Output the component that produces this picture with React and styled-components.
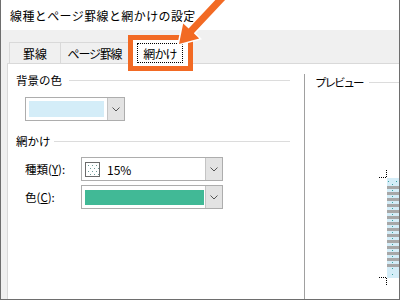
import React from "react";
import styled, { createGlobalStyle } from "styled-components";

const GlobalStyle = createGlobalStyle`
  body {
    margin: 0;
    background: #fff;
    font-family: "Noto Sans CJK JP", "Noto Sans", sans-serif;
    color: #000;
  }
`;

const Window = styled.div`
  position: relative;
  width: 400px;
  height: 300px;
  box-sizing: border-box;
  border-left: 1px solid #6e6e6e;
  border-right: 1px solid #6e6e6e;
  border-bottom: 1px solid #6e6e6e;
  display: flex;
  flex-direction: column;
  background: #fff;
  overflow: hidden;
`;

const TitleBar = styled.div`
  flex: none;
  height: 30px;
  padding-left: 9px;
  display: flex;
  align-items: center;
  font-size: 12px;
  letter-spacing: 0.4px;
`;

const Body = styled.div`
  flex: 1;
  display: flex;
  flex-direction: column;
  background: #f0f0f0;
  padding-left: 6px;
  min-height: 0;
`;

const TabRow = styled.div`
  flex: none;
  height: 33px;
  display: flex;
  align-items: flex-end;
  padding-left: 2px;
  position: relative;
  z-index: 1;
`;

const Tab = styled.div`
  position: relative;
  box-sizing: border-box;
  width: ${(p) => p.$width}px;
  height: ${(p) => (p.$active ? 26 : 21)}px;
  margin-left: ${(p) => (p.$first || p.$active ? 0 : -1)}px;
  margin-bottom: ${(p) => (p.$active ? -1 : 0)}px;
  border: 1px solid #d9d9d9;
  border-bottom: none;
  background: ${(p) => (p.$active ? "#fff" : "#f0f0f0")};
  display: flex;
  justify-content: center;
  align-items: ${(p) => (p.$active ? "flex-start" : "center")};
  padding-top: ${(p) => (p.$active ? 4 : 0)}px;
  font-size: 12px;
  letter-spacing: ${(p) => p.$tight || 0}px;
  white-space: nowrap;
`;

const FocusRing = styled.span`
  box-sizing: border-box;
  width: 46px;
  height: 20px;
  border: 1px dotted #000;
  display: flex;
  align-items: center;
  justify-content: center;
  letter-spacing: -0.8px;
`;

const Highlight = styled.div`
  position: absolute;
  top: -4px;
  left: -2px;
  right: -3px;
  bottom: -7px;
  border: 5px solid #f26a24;
  pointer-events: none;
`;

const Arrow = styled.svg`
  position: absolute;
  left: 170px;
  top: 0;
  z-index: 3;
  overflow: visible;
`;

const Panel = styled.div`
  flex: 1;
  display: flex;
  background: #fff;
  border-top: 1px solid #d9d9d9;
  border-left: 1px solid #d9d9d9;
  min-height: 0;
`;

const LeftCol = styled.div`
  flex: none;
  width: 296px;
  box-sizing: border-box;
  padding: 8px 0 0 8px;
  display: flex;
  flex-direction: column;
`;

const GroupHeader = styled.div`
  display: flex;
  align-items: center;
  height: 16px;
  gap: ${(p) => p.$gap || 6}px;
  padding-right: ${(p) => p.$pad ?? 14}px;
  margin-top: ${(p) => p.$top || 0}px;
  font-size: 11.5px;
  letter-spacing: ${(p) => p.$tight || 0}px;
  white-space: nowrap;
`;

const Rule = styled.div`
  flex: 1;
  height: 1px;
  background: #dcdcdc;
`;

const Combo = styled.div`
  box-sizing: border-box;
  width: ${(p) => p.$width}px;
  height: 24px;
  margin-left: ${(p) => p.$left || 0}px;
  margin-top: ${(p) => p.$top || 0}px;
  border: 1px solid #adadad;
  background: #fff;
  display: flex;
`;

const ComboField = styled.div`
  flex: 1;
  display: flex;
  align-items: center;
  padding: 0 ${(p) => p.$right ?? 3}px 0 3px;
  gap: 7px;
  font-size: 12px;
`;

const Swatch = styled.div`
  flex: 1;
  height: ${(p) => p.$h || 15}px;
  background: ${(p) => p.$color};
`;

const DropButton = styled.div`
  flex: none;
  width: 16px;
  background: #e3e3e3;
  border-left: 1px solid #c4c4c4;
  display: flex;
  align-items: center;
  justify-content: center;
`;

const FieldGrid = styled.div`
  display: grid;
  grid-template-columns: 56px 142px;
  row-gap: 4px;
  align-items: center;
  margin: 8px 0 0 9px;
`;

const FieldLabel = styled.div`
  font-size: 11.5px;
  white-space: nowrap;
`;

const PreviewCol = styled.div`
  flex: 1;
  margin-top: 10px;
  border-left: 1px solid #a0a0a0;
  padding-left: 10px;
  display: flex;
  flex-direction: column;
`;

const PreviewArt = styled.svg`
  align-self: flex-end;
  margin-top: 80px;
`;

const Chevron = () => (
  <svg width="8" height="5" viewBox="0 0 8 5">
    <polyline points="0.5,0.5 4,4 7.5,0.5" fill="none" stroke="#555" strokeWidth="1" />
  </svg>
);

const PatternIcon = () => {
  const dots = [];
  for (let y = 3; y < 14; y += 3) {
    for (let x = (y % 2 ? 3 : 5); x < 14; x += 4) {
      dots.push(<rect key={`${x}-${y}`} x={x} y={y} width="1" height="1" fill="#6c9c98" />);
    }
  }
  return (
    <svg width="15" height="15" viewBox="0 0 15 15" style={{ flex: "none" }}>
      <rect x="0.5" y="0.5" width="14" height="14" fill="#fff" stroke="#6a6a6a" />
      {dots}
    </svg>
  );
};

const Preview = () => {
  const stripes = [];
  const dots = [];
  for (let y = 16; y < 100; y += 6) {
    stripes.push(<rect key={`s${y}`} x="8" y={y} width="12" height="3" fill="#a7a7a7" />);
  }
  for (let y = 11, i = 0; y < 106; y += 3, i++) {
    if ((y - 16) % 6 >= 0 && (y - 16) % 6 < 3 && y >= 16) continue;
    const xs = i % 2 ? [13] : [9, 17];
    xs.forEach((x) => dots.push(<rect key={`d${x}-${y}`} x={x} y={y} width="1" height="1" fill="#3aa3a0" />));
  }
  return (
    <PreviewArt width="20" height="116" viewBox="0 0 20 116">
      <line x1="0" y1="7.5" x2="8" y2="7.5" stroke="#000" strokeDasharray="1 1" />
      <line x1="7.5" y1="0" x2="7.5" y2="8" stroke="#000" strokeDasharray="1 1" />
      <rect x="8" y="8" width="12" height="100" fill="#d4edf8" />
      {stripes}
      {dots}
      <line x1="0" y1="107.5" x2="8" y2="107.5" stroke="#000" strokeDasharray="1 1" />
      <line x1="7.5" y1="108" x2="7.5" y2="116" stroke="#000" strokeDasharray="1 1" />
    </PreviewArt>
  );
};

export default function App() {
  return (
    <>
      <GlobalStyle />
      <Window>
        <TitleBar>線種とページ罫線と網かけの設定</TitleBar>
        <Body>
          <TabRow>
            <Tab $first $width={52}>罫線</Tab>
            <Tab $width={69} $tight={-1.2}>ページ罫線</Tab>
            <Tab $active $width={62}>
              <FocusRing>網かけ</FocusRing>
              <Highlight />
            </Tab>
          </TabRow>
          <Panel>
            <LeftCol>
              <GroupHeader $gap={7}>
                背景の色
                <Rule />
              </GroupHeader>
              <Combo $width={100} $left={9} $top={9}>
                <ComboField>
                  <Swatch $color="#d4edf8" $h={16} />
                </ComboField>
                <DropButton>
                  <Chevron />
                </DropButton>
              </Combo>
              <GroupHeader $top={12} $gap={3}>
                網かけ
                <Rule />
              </GroupHeader>
              <FieldGrid>
                <FieldLabel>
                  種類(<u>Y</u>):
                </FieldLabel>
                <Combo $width={142}>
                  <ComboField>
                    <PatternIcon />
                    15%
                  </ComboField>
                  <DropButton>
                    <Chevron />
                  </DropButton>
                </Combo>
                <FieldLabel>
                  色(<u>C</u>):
                </FieldLabel>
                <Combo $width={142}>
                  <ComboField $right={1}>
                    <Swatch $color="#41b996" />
                  </ComboField>
                  <DropButton>
                    <Chevron />
                  </DropButton>
                </Combo>
              </FieldGrid>
            </LeftCol>
            <PreviewCol>
              <GroupHeader $pad={0} $tight={-2}>
                プレビュー
                <Rule />
              </GroupHeader>
              <Preview />
            </PreviewCol>
          </Panel>
        </Body>
        <Arrow width="60" height="50" viewBox="170 0 60 50">
          <polygon
            points="178,44 182.2,23.4 187.6,28.5 219.4,-5.4 224.6,-0.6 192.8,33.3 198.2,38.4"
            fill="#f26a24"
            stroke="#fff"
            strokeWidth="3"
            strokeLinejoin="miter"
            paintOrder="stroke"
          />
        </Arrow>
      </Window>
    </>
  );
}
